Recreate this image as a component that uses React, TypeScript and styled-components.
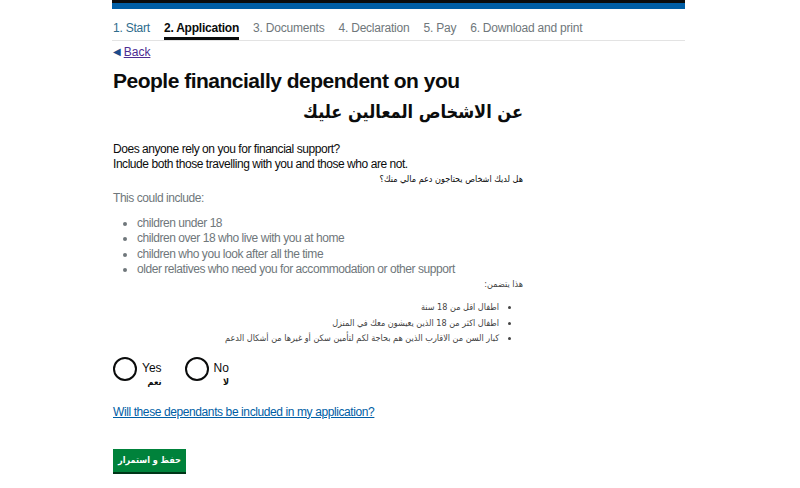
import React from "react";
import styled, { createGlobalStyle } from "styled-components";

const GlobalStyle = createGlobalStyle`
  body {
    margin: 0;
    background: #ffffff;
    font-family: "Liberation Sans", "DejaVu Sans", Arial, sans-serif;
    color: #0b0c0c;
  }
`;

const steps = [
  { label: "1. Start", state: "done" },
  { label: "2. Application", state: "active" },
  { label: "3. Documents", state: "todo" },
  { label: "4. Declaration", state: "todo" },
  { label: "5. Pay", state: "todo" },
  { label: "6. Download and print", state: "todo" },
];

const bullets = [
  "children under 18",
  "children over 18 who live with you at home",
  "children who you look after all the time",
  "older relatives who need you for accommodation or other support",
];

const arBullets = [
  "اطفال اقل من 18 سنة",
  "اطفال اكثر من 18 الذين يعيشون معك في المنزل",
  "كبار السن من الاقارب الذين هم بحاجة لكم لتأمين سكن أو غيرها من أشكال الدعم",
];

const App = () => {
  return (
    <>
      <GlobalStyle />
      <Page>
        <TopBar />
        <Nav>
          {steps.map((s) => (
            <NavItem key={s.label} $state={s.state}>
              {s.label}
            </NavItem>
          ))}
        </Nav>
        <Main>
          <BackLink href="#">
            <Arrow>◀</Arrow>
            <span>Back</span>
          </BackLink>
          <Title>People financially dependent on you</Title>
          <ArTitle>عن الاشخاص المعالين عليك</ArTitle>
          <Question>
            Does anyone rely on you for financial support?
            <br />
            Include both those travelling with you and those who are not.
          </Question>
          <ArSmall>هل لديك اشخاص يحتاجون دعم مالي منك؟</ArSmall>
          <Hint>This could include:</Hint>
          <List>
            {bullets.map((b) => (
              <li key={b}>{b}</li>
            ))}
          </List>
          <ArHint>هذا يتضمن:</ArHint>
          <ArList>
            {arBullets.map((b) => (
              <li key={b}>{b}</li>
            ))}
          </ArList>
          <Radios>
            <Radio>
              <Circle />
              <RadioText>
                <span>Yes</span>
                <ArLabel>نعم</ArLabel>
              </RadioText>
            </Radio>
            <Radio>
              <Circle />
              <RadioText>
                <span>No</span>
                <ArLabel>لا</ArLabel>
              </RadioText>
            </Radio>
          </Radios>
          <HelpLink href="#">Will these dependants be included in my application?</HelpLink>
          <Button>حفظ و استمرار</Button>
        </Main>
      </Page>
    </>
  );
};
export default App;

const Page = styled.div`
  width: 573px;
  margin-left: 112px;
`;

const TopBar = styled.div`
  height: 6px;
  border-top: 3px solid #0b0c0c;
  background: #005ea5;
`;

const Nav = styled.nav`
  display: flex;
  gap: 14px;
  height: 31px;
  padding-left: 1px;
  border-bottom: 1px solid #e3e3e3;
  align-items: flex-end;
`;

const NavItem = styled.div<{ $state: string }>`
  font-size: 12px;
  line-height: 14px;
  letter-spacing: -0.22px;
  padding-bottom: 2px;
  border-bottom: 3px solid
    ${(p) => (p.$state === "active" ? "#0b0c0c" : "transparent")};
  font-weight: ${(p) => (p.$state === "active" ? 700 : 400)};
  color: ${(p) =>
    p.$state === "active" ? "#0b0c0c" : p.$state === "done" ? "#2e6c8c" : "#6f777b"};
`;

const Main = styled.main`
  width: 410px;
  padding-left: 1px;
  display: flex;
  flex-direction: column;
  align-items: flex-start;
`;

const BackLink = styled.a`
  display: flex;
  align-items: center;
  gap: 3px;
  margin-top: 4px;
  font-size: 12px;
  line-height: 14px;
  color: #4c2c92;
  text-decoration: none;
  span {
    text-decoration: underline;
  }
`;

const Arrow = styled.span`
  font-size: 10px;
  color: #1d4a8a;
  text-decoration: none !important;
`;

const Title = styled.h1`
  margin: 9px 0 0;
  font-size: 21px;
  line-height: 26px;
  letter-spacing: -0.5px;
  font-weight: 700;
`;

const ArTitle = styled.div`
  align-self: stretch;
  direction: rtl;
  text-align: right;
  margin-top: 4px;
  font-family: "DejaVu Sans Condensed", "DejaVu Sans", sans-serif;
  font-stretch: condensed;
  font-size: 18px;
  line-height: 28px;
  font-weight: 700;
`;

const Question = styled.p`
  margin: 16px 0 0;
  font-size: 12px;
  line-height: 15px;
  letter-spacing: -0.45px;
`;

const ArSmall = styled.div`
  align-self: stretch;
  direction: rtl;
  text-align: right;
  font-family: "DejaVu Sans Condensed", "DejaVu Sans", sans-serif;
  font-size: 9px;
  line-height: 15px;
`;

const Hint = styled.p`
  margin: 4px 0 0;
  font-size: 12px;
  line-height: 15px;
  letter-spacing: -0.45px;
  color: #6f777b;
`;

const List = styled.ul`
  margin: 10px 0 0;
  padding-left: 24px;
  font-size: 12px;
  line-height: 15.3px;
  letter-spacing: -0.45px;
  color: #6f777b;
`;

const ArHint = styled.div`
  align-self: stretch;
  direction: rtl;
  text-align: right;
  font-family: "DejaVu Sans Condensed", "DejaVu Sans", sans-serif;
  font-size: 9px;
  line-height: 15px;
  color: #444;
`;

const ArList = styled.ul`
  align-self: stretch;
  direction: rtl;
  margin: 8px 0 0;
  padding-right: 24px;
  font-family: "DejaVu Sans Condensed", "DejaVu Sans", sans-serif;
  font-size: 9px;
  color: #444;
  li {
    height: 15.5px;
    line-height: 15.5px;
  }
`;

const Radios = styled.div`
  display: flex;
  gap: 23px;
  margin-top: 10px;
`;

const Radio = styled.label`
  display: flex;
  align-items: flex-start;
  gap: 5px;
`;

const Circle = styled.span`
  width: 20px;
  height: 20px;
  border: 2px solid #0b0c0c;
  border-radius: 50%;
`;

const RadioText = styled.span`
  display: flex;
  flex-direction: column;
  align-items: flex-end;
  font-size: 12px;
  line-height: 15px;
  padding-top: 4px;
`;

const ArLabel = styled.span`
  font-family: "DejaVu Sans Condensed", "DejaVu Sans", sans-serif;
  font-size: 9px;
  line-height: 12px;
  font-weight: 700;
`;

const HelpLink = styled.a`
  margin-top: 17px;
  font-size: 12px;
  line-height: 15px;
  letter-spacing: -0.4px;
  color: #005ea5;
`;

const Button = styled.button`
  margin-top: 29px;
  width: 73px;
  height: 25px;
  border: none;
  border-bottom: 2px solid #003618;
  background: #00823b;
  color: #ffffff;
  font-family: "DejaVu Sans Condensed", "DejaVu Sans", sans-serif;
  font-size: 9px;
  font-weight: 700;
  direction: rtl;
  padding: 0;
`;
